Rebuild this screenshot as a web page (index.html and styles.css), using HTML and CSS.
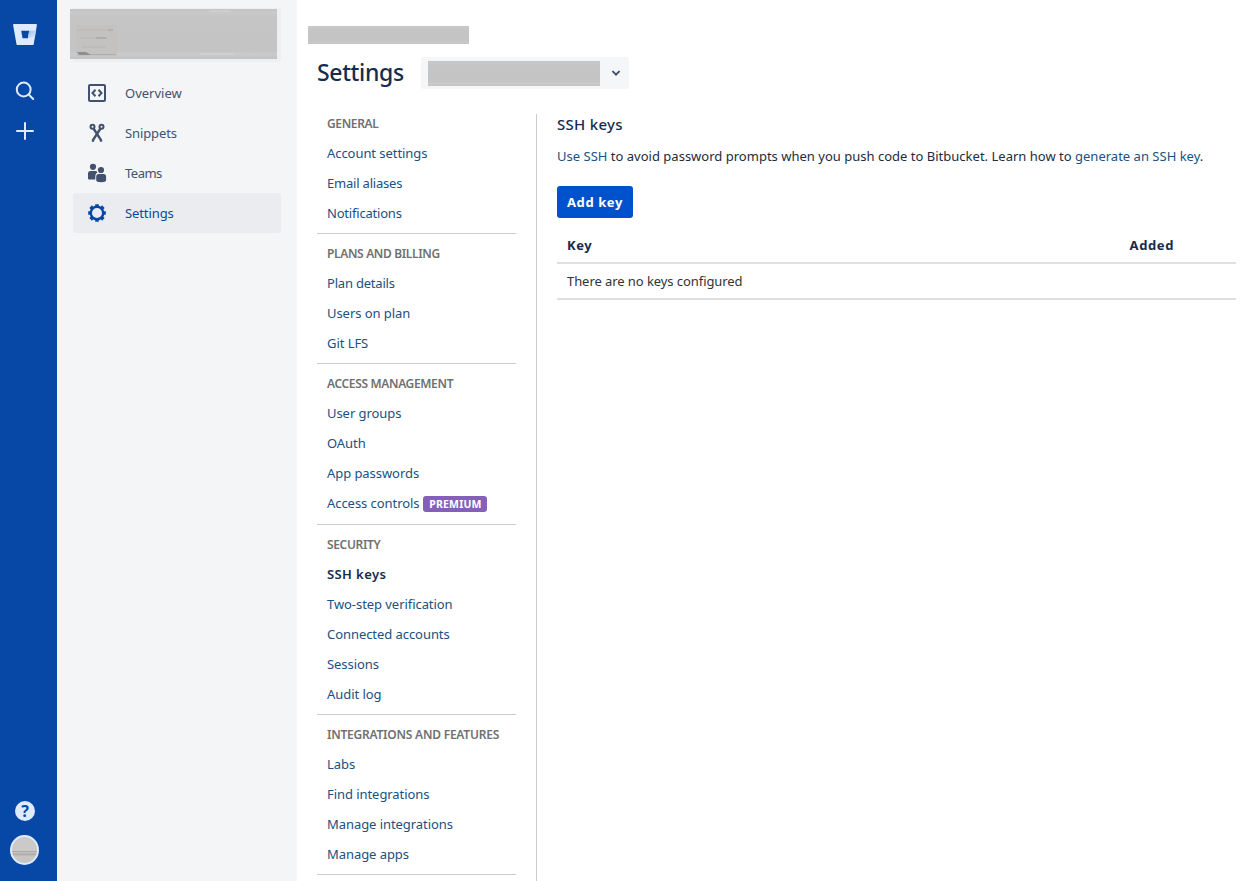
FILE: index.html
```html
<!DOCTYPE html>
<html lang="en">
<head>
<meta charset="utf-8">
<title>SSH keys</title>
<link rel="stylesheet" href="styles.css">
</head>
<body>
<div class="app">
  <nav class="rail">
    <svg class="rail-logo" width="24" height="22" viewBox="0 0 24 22"><defs><linearGradient id="shade" x1="0" y1="0" x2=".8" y2="1"><stop offset="0" stop-color="#9fb6e0"/><stop offset="1" stop-color="#deebff"/></linearGradient></defs><path d="M.8 0h22.4q.9 0 .7.900L20.700 20.200q-.2.900-1.100.900H4.600q-.9 0-1.100-.900L.1.900Q0 0 .8 0zM8.200 6.800l1.300 7.400h5.400l1.300-7.400z" fill="#deebff" fill-rule="evenodd"/><path d="M16.200 6.800H22.800L21.600 14.200H14.900z" fill="url(#shade)"/></svg>
    <svg class="rail-search" width="20" height="20" viewBox="0 0 20 20" fill="none" stroke="#deebff" stroke-width="2" stroke-linecap="round"><circle cx="8.700" cy="8.500" r="6.900"/><path d="M13.700 13.500l4.500 4.500"/></svg>
    <svg class="rail-plus" width="20" height="20" viewBox="0 0 20 20" fill="none" stroke="#deebff" stroke-width="2" stroke-linecap="round"><path d="M10 2v16M2 10h16"/></svg>
    <div class="rail-bottom">
      <span class="help">?</span>
      <span class="avatar"></span>
    </div>
  </nav>

  <aside class="sidebar">
    <div class="profile"><div class="masked profile-mask"><svg width="207" height="50" viewBox="0 0 207 50" fill="none"><rect x="6" y="16" width="41" height="31" fill="#c4c2c0"/><path d="M7 21h30M10 29h27M12 38h24" stroke="#b9b5b2"/><path d="M38 21h5M26 29h10" stroke="#a0a0a0"/><path d="M7 43h9l5 3H9z" fill="#8e8e8e"/><path d="M20 45.500h26" stroke="#b0adaa"/><path d="M130 45h34M140 2h20" stroke="#d4d4d4"/></svg></div></div>
    <a class="side-item"><svg width="20" height="20" viewBox="0 0 20 20" fill="none" stroke="#42526e" stroke-width="2"><rect x="2" y="2" width="16" height="16" rx="1"/><path d="M8.500 6.800L5.500 10l3 3.200M11.500 6.800l3 3.200-3 3.200"/></svg><span>Overview</span></a>
    <a class="side-item"><svg width="20" height="20" viewBox="0 0 20 20" fill="none" stroke="#42526e" stroke-width="2"><circle cx="5.500" cy="3.700" r="2"/><circle cx="14.500" cy="3.700" r="2"/><path d="M6.500 5.500L14 17v1.800M13.500 5.500L6 17v1.800" stroke-width="2.400"/></svg><span class="snug">Snippets</span></a>
    <a class="side-item"><svg width="20" height="20" viewBox="0 0 20 20" fill="#42526e"><circle cx="6" cy="3.800" r="3.100"/><circle cx="14" cy="7" r="3.100"/><path d="M1 15.500V10.500Q1 8 3.500 8H8.300Q9.700 8 10.400 9.200Q8.300 10.800 8.300 13v3.500H2Q1 16.500 1 15.500z"/><path d="M9.200 17v-3.500q0-2.600 2.600-2.600h4.700q2.600 0 2.600 2.600V17q0 2.200-5 2.200t-4.900-2.200z"/></svg><span class="tight">Teams</span></a>
    <a class="side-item side-item-on"><svg width="20" height="20" viewBox="0 0 20 20" fill="none" stroke="#0747a6"><circle cx="10" cy="10" r="6.200" stroke-width="2.400"/><path d="M10 1.200v2.500M10 16.300v2.500M1.200 10h2.500M16.300 10h2.500M3.640 3.640L5.400 5.400M14.600 14.600l1.760 1.760M3.640 16.360L5.400 14.600M14.600 5.400l1.760-1.760" stroke-width="3.600"/></svg><span class="snug">Settings</span></a>
  </aside>

  <main class="content">
    <div class="masked crumb"></div>
    <header class="page-head">
      <h1>Settings</h1>
      <div class="picker"><div class="masked picker-mask"></div><svg width="10" height="8" viewBox="0 0 10 8" fill="none" stroke="#42526e" stroke-width="2" stroke-linecap="round"><path d="M2 1.600l3 3 3-3"/></svg></div>
    </header>
    <div class="columns">
      <nav class="menu">
        <section><h2>General</h2><a>Account settings</a><a class="snug">Email aliases</a><a class="snug">Notifications</a></section>
        <section><h2>Plans and billing</h2><a class="snug">Plan details</a><a>Users on plan</a><a>Git LFS</a></section>
        <section><h2>Access management</h2><a>User groups</a><a>OAuth</a><a>App passwords</a><a class="with-badge">Access controls<span class="badge">PREMIUM</span></a></section>
        <section><h2>Security</h2><a class="current">SSH keys</a><a>Two-step verification</a><a>Connected accounts</a><a>Sessions</a><a>Audit log</a></section>
        <section><h2 class="wide">Integrations and features</h2><a>Labs</a><a>Find integrations</a><a>Manage integrations</a><a>Manage apps</a></section>
      </nav>
      <div class="panel">
        <h3>SSH keys</h3>
        <p><a>Use SSH</a> to avoid password prompts when you push code to Bitbucket. Learn how to <a>generate an SSH key</a>.</p>
        <button class="add">Add key</button>
        <div class="row row-head"><span>Key</span><span>Added</span></div>
        <div class="row">There are no keys configured</div>
      </div>
    </div>
  </main>
</div>
</body>
</html>
```
FILE: styles.css
```css
* { box-sizing: border-box; }
body { margin: 0; font: 13px/20px "Noto Sans", "Open Sans", sans-serif; color: #222c3c; background: #fff; }
h1, h2, h3, p { margin: 0; }
svg { display: block; flex: none; }
.app { display: flex; height: 881px; overflow: hidden; white-space: nowrap; }

.rail { width: 57px; flex: none; background: #0747a6; display: flex; flex-direction: column; padding: 24px 0 16px 13px; }
.rail-search { margin: 35px 0 0 2px; }
.rail-plus { margin: 20px 0 0 2px; }
.rail-bottom { margin-top: auto; margin-left: -3px; display: flex; flex-direction: column; gap: 14px; }
.help { width: 20px; height: 20px; margin-left: 5px; border-radius: 50%; background: #deebff; color: #0747a6; font-weight: 700; font-size: 16px; line-height: 20px; text-align: center; }
.avatar { width: 29px; height: 30px; border-radius: 50%; border: 2px solid #deebff; background: linear-gradient(#cbcac8 0 52%, #aaa7a3 56%, #c9c6c1 60%, #aaa9a7 66%, #c7c6c5 74%); }

.sidebar { width: 240px; flex: none; background: #f4f5f7; padding: 8px 16px; }
.profile { width: 211px; height: 54px; margin: 0 0 11px -3px; padding: 1px 0 0; border-radius: 3px; background: linear-gradient(90deg, #f4f5f7 3px, #eeeff2 3px); }
.masked { background: linear-gradient(#c3c3c3, #cacaca 8%, #c5c5c5 14%, #c4c4c4 84%, #cbcbcb 90%, #c2c2c2); }
.profile-mask { width: 207px; height: 50px; }
.side-item { height: 40px; display: flex; align-items: center; gap: 18px; padding-left: 14px; border-radius: 3px; color: #42526e; }
.side-item-on { background: #ebecf0; color: #0747a6; }
.tight { letter-spacing: -.5px; }
.side-item .snug { letter-spacing: -.1px; }

.content { flex: 1; min-width: 0; padding: 26px 13px 0 11px; }
.crumb { width: 161px; height: 18px; }
.page-head { display: flex; align-items: center; gap: 17px; height: 32px; margin: 13px 0 20px 9px; }
h1 { width: 87px; font-size: 23px; font-weight: 500; line-height: 30px; padding-bottom: 2px; color: #172b4d; letter-spacing: -.35px; }
.picker { width: 208px; height: 32px; padding: 4px 8px 3px 7px; border-radius: 3px; background: #f5f6f8; display: flex; align-items: center; justify-content: space-between; }
.picker-mask { width: 172px; height: 25px; }

.columns { display: flex; margin-left: 9px; }
.menu { width: 199px; flex: none; }
.menu section { padding-bottom: 4px; margin-bottom: 5px; border-bottom: 1px solid #ccc; }
.menu h2, .menu a { display: block; height: 30px; padding-left: 10px; font-size: 13px; line-height: 28px; }
.menu h2 { font-size: 12px; font-weight: 600; line-height: 30px; text-transform: uppercase; color: #707070; letter-spacing: -.35px; }
.menu h2.wide { letter-spacing: -.23px; }
.menu a { letter-spacing: -.06px; }
.menu a.snug { letter-spacing: -.2px; }
.menu a, p a { color: #205081; }
.menu .with-badge { display: flex; gap: 4px; height: 31px; }
.menu .current { color: #172b4d; font-weight: 600; letter-spacing: .4px; }
.badge { width: 64px; height: 16px; margin-top: 7px; border-radius: 3px; background: #8560b8; color: #fff; font-size: 10.500px; font-weight: 700; line-height: 16px; letter-spacing: .2px; text-align: center; }

.panel { flex: 1; min-width: 0; margin: 5px 0 0 20px; padding-left: 20px; border-left: 1px solid #ccc; height: 780px; }
h3 { font-size: 15px; font-weight: 500; line-height: 20px; padding-bottom: 2px; letter-spacing: .3px; color: #172b4d; }
p { margin-top: 10px; letter-spacing: .01px; }
.add { display: block; width: 76px; height: 32px; margin-top: 20px; padding: 0; border: 0; border-radius: 3px; background: #0052cc; color: #fff; font: 700 13px/32px "Noto Sans", sans-serif; letter-spacing: .6px; }
.row { height: 36px; padding: 0 62px 0 10px; line-height: 34px; letter-spacing: -.07px; border-bottom: 2px solid #dfdfdf; color: #333; }
.row-head { display: flex; justify-content: space-between; margin-top: 10px; font-weight: 700; letter-spacing: .6px; color: #172b4d; }
```
